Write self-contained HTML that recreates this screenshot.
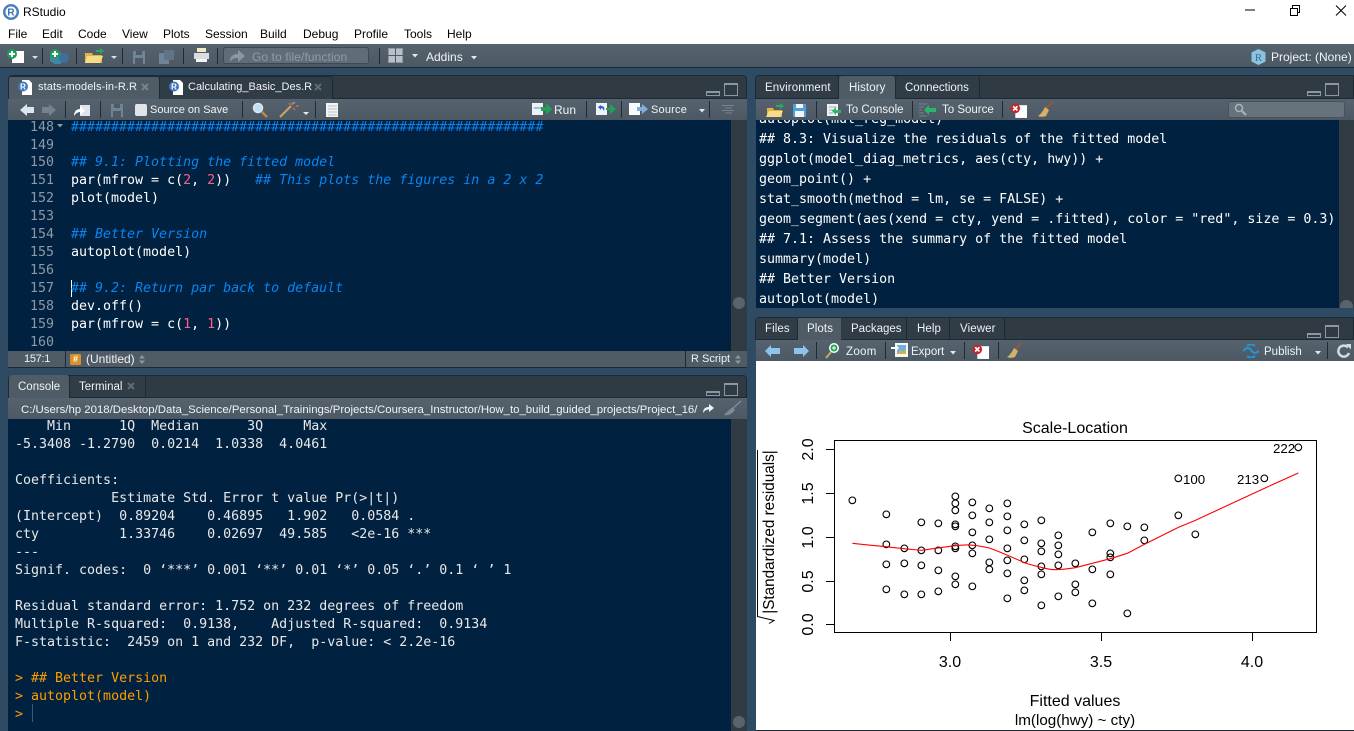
<!DOCTYPE html>
<html><head><meta charset="utf-8"><title>RStudio</title>
<style>
html,body{margin:0;padding:0}
body{width:1354px;height:731px;position:relative;overflow:hidden;background:#2f4a63;font:12px "Liberation Sans",sans-serif;color:#fff}
div,span.t,svg{position:absolute}
.t{position:absolute;white-space:pre;line-height:16px;color:#f0f3f5}
.m{position:absolute;white-space:pre;font:13.3px/18px "DejaVu Sans Mono","Liberation Mono",monospace;color:#fff;left:0;margin-top:2px}
.con .m{color:#e8e8e8}
.c{color:#0a84ee;font-style:italic}
.n{color:#ff5f85}
.g{position:absolute;white-space:pre;font:13.3px/18px "DejaVu Sans Mono",monospace;color:#8c9aa6;text-align:right;width:46px;left:0;margin-top:2px}
.bar{background:linear-gradient(#56636e,#4c5964)}
.tabs{background:#2f3a43}
.tab{position:absolute;background:#303c46;border:1px solid #1c2a37;border-bottom:none;border-radius:3px 3px 0 0;box-sizing:border-box}
.tab.a{background:#4f5c66}
.sep{position:absolute;width:1px;background:#1e2b36}
.mn{color:#000;font-size:12px}
.s{font-size:11px}
</style></head><body>

<!-- title bar -->
<div style="left:0;top:0;width:1354px;height:44px;background:#fff"></div>
<svg style="left:2px;top:3px" width="18" height="18" viewBox="0 0 18 18"><circle cx="9" cy="9" r="8" fill="#4a7fc0"/><circle cx="9" cy="9" r="5.500" fill="#fff"/><text x="9" y="12.500" font-size="10" font-weight="bold" text-anchor="middle" fill="#3a6fb0" font-family="Liberation Sans">R</text></svg>
<span class="t mn" style="left:23px;top:4px">RStudio</span>
<span class="t mn" style="left:8px;top:26px">File</span>
<span class="t mn" style="left:42px;top:26px">Edit</span>
<span class="t mn" style="left:78px;top:26px">Code</span>
<span class="t mn" style="left:122px;top:26px">View</span>
<span class="t mn" style="left:163px;top:26px">Plots</span>
<span class="t mn" style="left:205px;top:26px">Session</span>
<span class="t mn" style="left:260px;top:26px">Build</span>
<span class="t mn" style="left:303px;top:26px">Debug</span>
<span class="t mn" style="left:354px;top:26px">Profile</span>
<span class="t mn" style="left:404px;top:26px">Tools</span>
<span class="t mn" style="left:447px;top:26px">Help</span>
<svg style="left:1240px;top:0" width="114" height="22" viewBox="0 0 114 22"><path d="M5 10h10" stroke="#000" fill="none"/><path d="M50.500 8.500h7v7h-7zM52.500 8V5.500h7v7H58" stroke="#000" fill="none"/><path d="M96 5.500l10 10M106 5.500l-10 10" stroke="#000" fill="none"/></svg>

<!-- main toolbar -->
<div class="bar" style="left:0;top:44px;width:1354px;height:23px"></div>
<div style="left:0;top:67px;width:1354px;height:1px;background:#1c2c3b"></div>
<svg style="left:6px;top:47px" width="190" height="18" viewBox="0 0 190 18">
<path d="M6 4h12v12H6z" fill="#fff"/><circle cx="6" cy="7" r="5" fill="#1f9e55"/><path d="M3 7h6M6 4v6" stroke="#fff" stroke-width="2"/>
<path d="M26 9h6l-3 3z" fill="#ddd"/>
<path d="M44 9l5-4 5 0 4 4v5l-4 3h-5l-5-3z" fill="#3d88a8"/><circle cx="58" cy="11" r="5" fill="#3d6f9c"/><circle cx="49" cy="7" r="5" fill="#1f9e55"/><path d="M46 7h6M49 4v6" stroke="#fff" stroke-width="2"/>
<path d="M79 6h7l1 2h9v8H79z" fill="#e3b33f"/><path d="M81 9h16l-3 7H79z" fill="#f6dc88"/><path d="M90 3h4V1l4 3-4 3V5h-4z" fill="#2aa860"/>
<path d="M105 9h6l-3 3z" fill="#ddd"/>
<path d="M127 4h12v13h-12z" fill="#6f8496"/><path d="M130 4h6v4h-6zM129 11h8v6h-8z" fill="#4e5b66"/>
<path d="M153 6h10v11h-10z" fill="#6f8496"/><path d="M158 3h10v10h-10z" fill="#5f7486"/>
</svg>
<div class="sep" style="left:42px;top:48px;height:16px"></div>
<div class="sep" style="left:76px;top:48px;height:16px"></div>
<div class="sep" style="left:122px;top:48px;height:16px"></div>
<div class="sep" style="left:183px;top:48px;height:16px"></div>
<div class="sep" style="left:217px;top:48px;height:16px"></div>
<div class="sep" style="left:379px;top:48px;height:16px"></div>
<svg style="left:193px;top:47px" width="17" height="17" viewBox="0 0 17 17"><path d="M4 1h9v4H4z" fill="#f1e9c9"/><path d="M1 6h15v6H1z" fill="#d9dde0"/><path d="M3 12h11v3H3z" fill="#f4f6f7"/></svg>
<div style="left:223px;top:47px;width:146px;height:17px;background:#606d78;border:1px solid #3c4853;border-radius:3px;box-sizing:border-box"></div>
<svg style="left:229px;top:48px" width="17" height="15" viewBox="0 0 17 15"><path d="M1 14c0-6 3-8 8-8V2l7 6-7 6v-4c-4 0-6 1-8 4z" fill="#8b98a3"/></svg>
<span class="t" style="left:252px;top:49px;color:#8f9ca7;letter-spacing:.1px">Go to file/function</span>
<svg style="left:388px;top:48px" width="15" height="15" viewBox="0 0 15 15"><path d="M0 0h15v15H0z" fill="#8b98a3"/><path d="M1 1h6v6H1zM8 1h6v6H8zM1 8h6v6H1zM8 8h6v6H8z" fill="#b8c1c8"/><path d="M7 0h1v15H7zM0 7h15v1H0z" fill="#4e5b66"/></svg>
<svg style="left:412px;top:54px" width="6" height="4" viewBox="0 0 6 4"><path d="M0 0h6L3 3.500z" fill="#e6e9ec"/></svg>
<span class="t" style="left:426px;top:49px;">Addins</span>
<svg style="left:471px;top:56px" width="6" height="4" viewBox="0 0 6 4"><path d="M0 0h6L3 3.500z" fill="#e6e9ec"/></svg>
<svg style="left:1251px;top:49px" width="15" height="16" viewBox="0 0 15 16"><path d="M7.500 0l7 3.500v9l-7 3.500-7-3.500v-9z" fill="#8cc4e0"/><text x="7.500" y="12" font-size="11" text-anchor="middle" fill="#3a6fa0" font-family="Liberation Serif">R</text></svg>
<span class="t" style="left:1271px;top:49px;">Project: (None)</span>

<!-- SOURCE PANE -->
<div class="tabs" style="left:8px;top:75px;width:739px;height:24px;border-radius:4px 4px 0 0;border:1px solid #1c2a37;box-sizing:border-box"></div>
<div class="tab a" style="left:8px;top:76px;width:152px;height:24px;border-color:#1c2a37"></div>
<div class="tab" style="left:159px;top:76px;width:174px;height:23px"></div>
<svg style="left:17px;top:80px" width="17" height="16" viewBox="0 0 17 16"><path d="M5 0h7l3 3v12H5z" fill="#fff"/><circle cx="6" cy="6.500" r="5" fill="#3f78bd"/><text x="6" y="9.500" font-size="8" font-weight="bold" text-anchor="middle" fill="#fff" font-family="Liberation Sans">R</text></svg>
<span class="t s" style="left:38px;top:79px;letter-spacing:.1px">stats-models-in-R.R</span>
<svg style="left:141px;top:83px" width="8" height="8" viewBox="0 0 8 8"><path d="M1 1l6 6M7 1L1 7" stroke="#76838e" stroke-width="2"/></svg>
<svg style="left:168px;top:80px" width="17" height="16" viewBox="0 0 17 16"><path d="M5 0h7l3 3v12H5z" fill="#fff"/><circle cx="6" cy="6.500" r="5" fill="#3f78bd"/><text x="6" y="9.500" font-size="8" font-weight="bold" text-anchor="middle" fill="#fff" font-family="Liberation Sans">R</text></svg>
<span class="t s" style="left:188px;top:79px;">Calculating_Basic_Des.R</span>
<svg style="left:314px;top:83px" width="8" height="8" viewBox="0 0 8 8"><path d="M1 1l6 6M7 1L1 7" stroke="#5f6c77" stroke-width="2"/></svg>
<svg style="left:706px;top:82px" width="33" height="15" viewBox="0 0 33 15"><path d="M.5 9.500h13v4H.5z" fill="none" stroke="#8b98a3"/><path d="M1 9h13v2H1z" fill="#8b98a3"/><path d="M18.500 1.500h13v12h-13z" fill="none" stroke="#8b98a3"/><path d="M18 1h14v2H18z" fill="#8b98a3"/></svg>

<div class="bar" style="left:8px;top:99px;width:739px;height:21px"></div>
<svg style="left:20px;top:102px" width="330" height="16" viewBox="0 0 330 16">
<path d="M0 8l7-6v3h7v6H7v3z" fill="#dde6ee"/><path d="M28 8l-7-6v3h-7v6h7v3z" fill="#76838e" transform="translate(8,0)"/>
<path d="M60 3h10v11H60z" fill="#dfe5ea"/><path d="M54 14c0-4 2-7 6-7V4l5 4.500-5 4.500v-3c-2 0-4 1-6 4z" fill="#fff"/>
<path d="M91 2h12v13H91z" fill="#6f8496"/><path d="M94 2h6v4h-6zM93 9h8v6h-8z" fill="#4e5b66"/>
</svg>
<div class="sep" style="left:65px;top:101px;height:17px"></div>
<div class="sep" style="left:100px;top:101px;height:17px"></div>
<div class="sep" style="left:242px;top:101px;height:17px"></div>
<div class="sep" style="left:315px;top:101px;height:17px"></div>
<div style="left:135px;top:104px;width:12px;height:12px;background:#dfe5ea;border-radius:2px"></div>
<span class="t s" style="left:150px;top:102px;">Source on Save</span>
<svg style="left:252px;top:102px" width="16" height="16" viewBox="0 0 16 16"><circle cx="6" cy="6" r="4.500" fill="#bfe0f5" stroke="#dfe5ea" stroke-width="1.500"/><path d="M9.500 9.500L15 15" stroke="#b98a4a" stroke-width="2.500"/></svg>
<svg style="left:279px;top:101px" width="32" height="17" viewBox="0 0 32 17"><path d="M1 16L12 5" stroke="#c9a36a" stroke-width="2"/><path d="M13 1v3M17 5h3M14 7l2 2M10 2l1 2" stroke="#e86a4a" stroke-width="1.200"/><path d="M16 1l-2 2" stroke="#70b0e0" stroke-width="1.200"/><path d="M24 11h6l-3 3z" fill="#e6e9ec"/></svg>
<svg style="left:325px;top:103px" width="14" height="14" viewBox="0 0 14 14"><path d="M1 0h12v14H1z" fill="#f1f3f5"/><path d="M3 3h9M3 6h9M3 9h9M3 12h9" stroke="#b9c2c9"/></svg>

<svg style="left:532px;top:102px" width="20" height="15" viewBox="0 0 20 15"><path d="M0 1h11v12H0z" fill="#eef2f5"/><path d="M2 6h7" stroke="#9cc0e0" stroke-width="2"/><path d="M9 5h5V1l6 6-6 6V9H9z" fill="#1fa456"/></svg>
<span class="t" style="left:554px;top:102px;">Run</span>
<div class="sep" style="left:586px;top:101px;height:17px"></div>
<svg style="left:596px;top:102px" width="20" height="15" viewBox="0 0 20 15"><path d="M0 1h11v12H0z" fill="#eef2f5"/><path d="M2 5l3-2v1c3 0 4 2 3 5l-1-2c-1-1-2-1-2 0v1z" fill="#2a5fd0"/><path d="M10 6h4V2l6 5-6 5V8h-4z" fill="#1fa456"/></svg>
<div class="sep" style="left:621px;top:101px;height:17px"></div>
<svg style="left:629px;top:102px" width="19" height="15" viewBox="0 0 19 15"><path d="M0 1h11v12H0z" fill="#f7f9fa"/><path d="M8 5h5V2l6 5-6 5V9H8z" fill="#7fb0dc"/></svg>
<span class="t s" style="left:651px;top:102px;letter-spacing:.2px">Source</span>
<svg style="left:699px;top:109px" width="6" height="4" viewBox="0 0 6 4"><path d="M0 0h6L3 3.500z" fill="#e6e9ec"/></svg>
<div class="sep" style="left:709px;top:101px;height:17px"></div>
<svg style="left:722px;top:105px" width="12" height="10" viewBox="0 0 12 10"><path d="M0 .5h12M3 3h7M0 5.500h12M3 8h7" stroke="#76838e"/></svg>

<!-- editor -->
<div id="ed" style="left:8px;top:120px;width:739px;height:231px;background:#002240;overflow:hidden">
 <div style="left:723px;top:0;width:16px;height:231px;background:#303b44"></div>
 <div style="left:725px;top:177px;width:12px;height:12px;border-radius:6px;background:#59636c"></div>
 <span class="g" style="top:-3px">148</span><span class="g" style="top:15px">149</span><span class="g" style="top:32px">150</span><span class="g" style="top:50px">151</span><span class="g" style="top:68px">152</span><span class="g" style="top:86px">153</span><span class="g" style="top:104px">154</span><span class="g" style="top:122px">155</span><span class="g" style="top:140px">156</span><span class="g" style="top:158px">157</span><span class="g" style="top:176px">158</span><span class="g" style="top:194px">159</span><span class="g" style="top:212px">160</span>
 <svg style="left:49px;top:4px" width="6" height="4" viewBox="0 0 6 4"><path d="M0 0h6L3 3.500z" fill="#8c9aa6"/></svg>
 <div style="left:62.500px;top:160px;width:1.500px;height:17px;background:#fff"></div>
 <div style="left:63px;top:0;width:660px;height:231px">
  <span class="m c" style="top:-3px;font-style:normal">###########################################################</span>
  <span class="m c" style="top:32px">## 9.1: Plotting the fitted model</span>
  <span class="m" style="top:50px">par(mfrow = c(<span class="n">2</span>, <span class="n">2</span>))   <span class="c">## This plots the figures in a 2 x 2</span></span>
  <span class="m" style="top:68px">plot(model)</span>
  <span class="m c" style="top:104px">## Better Version</span>
  <span class="m" style="top:122px">autoplot(model)</span>
  <span class="m c" style="top:158px">## 9.2: Return par back to default</span>
  <span class="m" style="top:176px">dev.off()</span>
  <span class="m" style="top:194px">par(mfrow = c(<span class="n">1</span>, <span class="n">1</span>))</span>
 </div>
</div>
<div style="left:8px;top:351px;width:739px;height:16px;background:#4f5c66"></div>
<div style="left:8px;top:367px;width:739px;height:1px;background:#1c2a37"></div>
<div class="sep" style="left:65px;top:351px;height:16px"></div>
<div class="sep" style="left:685px;top:351px;height:16px"></div>
<span class="t s" style="left:24px;top:351px;letter-spacing:-.3px">157:1</span>
<div style="left:70px;top:354px;width:11px;height:11px;background:#d9902a;border-radius:1px;font:bold 9px/11px 'Liberation Sans';text-align:center;color:#fff">#</div>
<span class="t" style="left:86px;top:351px">(Untitled)</span>
<svg style="left:139px;top:355px" width="6" height="9" viewBox="0 0 6 9"><path d="M0 3.500L3 0l3 3.500zM0 5.500L3 9l3-3.500z" fill="#8b98a3"/></svg>
<span class="t s" style="left:691px;top:351px;">R Script</span>
<svg style="left:735px;top:355px" width="6" height="9" viewBox="0 0 6 9"><path d="M0 3.500L3 0l3 3.500zM0 5.500L3 9l3-3.500z" fill="#8b98a3"/></svg>

<!-- CONSOLE -->
<div class="tabs" style="left:8px;top:375px;width:739px;height:23px;border-radius:4px 4px 0 0;border:1px solid #1c2a37;box-sizing:border-box"></div>
<div class="tab a" style="left:9px;top:375px;width:61px;height:23px;border:none;border-right:1px solid #1c2a37"></div>
<div style="left:70px;top:376px;width:75px;height:21px;background:#303c46;border-right:1px solid #1c2a37"></div>
<span class="t" style="left:18px;top:379px;font-size:11.500px">Console</span>
<span class="t" style="left:79px;top:379px;font-size:11.500px">Terminal</span>
<svg style="left:127px;top:382px" width="8" height="8" viewBox="0 0 8 8"><path d="M1 1l6 6M7 1L1 7" stroke="#5f6c77" stroke-width="2"/></svg>
<svg style="left:706px;top:382px" width="33" height="15" viewBox="0 0 33 15"><path d="M.5 9.500h13v4H.5z" fill="none" stroke="#8b98a3"/><path d="M1 9h13v2H1z" fill="#8b98a3"/><path d="M18.500 1.500h13v12h-13z" fill="none" stroke="#8b98a3"/><path d="M18 1h14v2H18z" fill="#8b98a3"/></svg>
<div class="bar" style="left:8px;top:398px;width:739px;height:21px"></div>
<span class="t" style="left:21px;top:402px;font-size:11.400px;">C:/Users/hp 2018/Desktop/Data_Science/Personal_Trainings/Projects/Coursera_Instructor/How_to_build_guided_projects/Project_16/</span>
<svg style="left:702px;top:403px" width="13" height="11" viewBox="0 0 13 11"><path d="M1 10c0-4 2-6 6-6V1l5 4-5 4V6.500c-3 0-4 1-6 3.500z" fill="#eef2f5"/></svg>
<svg style="left:723px;top:400px" width="19" height="17" viewBox="0 0 19 17"><path d="M18 1L9 9" stroke="#7f8c97" stroke-width="1.500"/><path d="M10 7c-2 1-6 5-9 8 4 1 8-1 11-5z" fill="#7f8c97"/></svg>

<div class="con" style="left:8px;top:419px;width:739px;height:312px;background:#002240;overflow:hidden">
 <div style="left:723px;top:0;width:16px;height:312px;background:#303b44"></div>
 <div style="left:725px;top:297px;width:12px;height:12px;border-radius:6px;background:#59636c"></div>
 <div style="left:7px;top:0;width:715px;height:312px">
<span class="m" style="top:-3px">    Min      1Q  Median      3Q     Max </span>
<span class="m" style="top:15px">-5.3408 -1.2790  0.0214  1.0338  4.0461 </span>
<span class="m" style="top:51px">Coefficients:</span>
<span class="m" style="top:69px">            Estimate Std. Error t value Pr(&gt;|t|)    </span>
<span class="m" style="top:87px">(Intercept)  0.89204    0.46895   1.902   0.0584 .  </span>
<span class="m" style="top:105px">cty          1.33746    0.02697  49.585   &lt;2e-16 ***</span>
<span class="m" style="top:123px">---</span>
<span class="m" style="top:141px">Signif. codes:  0 ‘***’ 0.001 ‘**’ 0.01 ‘*’ 0.05 ‘.’ 0.1 ‘ ’ 1</span>
<span class="m" style="top:177px">Residual standard error: 1.752 on 232 degrees of freedom</span>
<span class="m" style="top:195px">Multiple R-squared:  0.9138,    Adjusted R-squared:  0.9134 </span>
<span class="m" style="top:213px">F-statistic:  2459 on 1 and 232 DF,  p-value: &lt; 2.2e-16</span>
<span class="m" style="top:249px;color:#ff9d00">&gt; ## Better Version</span>
<span class="m" style="top:267px;color:#ff9d00">&gt; autoplot(model)</span>
<span class="m" style="top:285px;color:#ff9d00">&gt; </span>
<div style="left:17px;top:285px;width:1px;height:18px;background:#3b5a78"></div>
 </div>
</div>

<!-- ENV/HISTORY PANE -->
<div class="tabs" style="left:755px;top:75px;width:599px;height:24px;border-radius:4px 0 0 0;border:1px solid #1c2a37;box-sizing:border-box"></div>
<div class="tab" style="left:756px;top:76px;width:83px;height:22px;border:none;border-right:1px solid #1c2a37"></div>
<div class="tab a" style="left:839px;top:76px;width:56px;height:23px;border:none"></div>
<div class="tab" style="left:895px;top:76px;width:85px;height:22px;border:none;border-right:1px solid #1c2a37;border-left:1px solid #1c2a37"></div>
<span class="t" style="left:765px;top:80px;font-size:11.500px;letter-spacing:.1px">Environment</span>
<span class="t" style="left:849px;top:80px;font-size:11.500px;letter-spacing:.1px">History</span>
<span class="t" style="left:905px;top:80px;font-size:11.500px;">Connections</span>
<svg style="left:1307px;top:82px" width="33" height="15" viewBox="0 0 33 15"><path d="M.5 9.500h13v4H.5z" fill="none" stroke="#8b98a3"/><path d="M1 9h13v2H1z" fill="#8b98a3"/><path d="M18.500 1.500h13v12h-13z" fill="none" stroke="#8b98a3"/><path d="M18 1h14v2H18z" fill="#8b98a3"/></svg>
<div class="bar" style="left:756px;top:99px;width:598px;height:21px"></div>
<svg style="left:764px;top:102px" width="48" height="16" viewBox="0 0 48 16"><path d="M3 6h6l1 2h8v7H3z" fill="#e3b33f"/><path d="M5 9h14l-3 6H2z" fill="#f6dc88"/><path d="M12 3h4V1l4 3-4 3V5h-4z" fill="#2aa860"/><path d="M29 2h13v13H29z" fill="#4f9fdc"/><path d="M32 2h7v4h-7zM31 9h9v6h-9z" fill="#f2f5f7"/></svg>
<div class="sep" style="left:816px;top:101px;height:17px"></div>
<svg style="left:826px;top:102px" width="16" height="15" viewBox="0 0 16 15"><path d="M1 2h11v12H1z" fill="#eef2f5"/><path d="M3 5h7M3 8h4M3 11h4" stroke="#a0aab2"/><path d="M15 8H10V5L6 9l4 4v-2h5z" fill="#2ab56a"/></svg>
<span class="t" style="left:846px;top:102px;font-size:11.500px;">To Console</span>
<div class="sep" style="left:912px;top:101px;height:17px"></div>
<svg style="left:919px;top:103px" width="18" height="14" viewBox="0 0 18 14"><path d="M0 1h8M0 4h5M0 7h3M0 10h5M0 13h8" stroke="#76838e"/><path d="M17 5h-7V2L5 7l5 5V9h7z" fill="#2ab56a"/></svg>
<span class="t" style="left:942px;top:102px;font-size:11.500px;">To Source</span>
<div class="sep" style="left:1002px;top:101px;height:17px"></div>
<svg style="left:1010px;top:103px" width="17" height="15" viewBox="0 0 16 14"><path d="M5 2h11v12H5z" fill="#fff"/><circle cx="5" cy="5" r="4.500" fill="#c8222a"/><path d="M3 3l4 4M7 3L3 7" stroke="#fff" stroke-width="1.500"/></svg>
<svg style="left:1037px;top:101px" width="16" height="17" viewBox="0 0 16 17"><path d="M15 1L9 8" stroke="#b0512e" stroke-width="1.500"/><path d="M8 6l4 3-3 6c-3 1-6 1-8 0 3-2 5-5 7-9z" fill="#d5b16a"/></svg>
<div style="left:1228px;top:101px;width:117px;height:17px;background:#66727c;border:1px solid #46525c;border-radius:3px;box-sizing:border-box"></div>
<svg style="left:1234px;top:103px" width="13" height="13" viewBox="0 0 13 13"><circle cx="5" cy="5" r="3.500" fill="none" stroke="#a9b4bc" stroke-width="1.500"/><path d="M8 8l4 4" stroke="#a9b4bc" stroke-width="2"/></svg>
<div style="left:756px;top:120px;width:598px;height:188px;background:#002240;overflow:hidden">
 <div style="left:583px;top:0;width:15px;height:188px;background:#303b44"></div>
 <div style="left:584px;top:180px;width:13px;height:13px;border-radius:7px;background:#59636c"></div>
 <div style="left:3px;top:0;width:582px;height:188px;overflow:hidden">
 <span class="m" style="top:-11px">autoplot(mul_reg_model)</span>
 <span class="m" style="top:9px">## 8.3: Visualize the residuals of the fitted model</span>
 <span class="m" style="top:29px">ggplot(model_diag_metrics, aes(cty, hwy)) +</span>
 <span class="m" style="top:49px">geom_point() +</span>
 <span class="m" style="top:69px">stat_smooth(method = lm, se = FALSE) +</span>
 <span class="m" style="top:89px">geom_segment(aes(xend = cty, yend = .fitted), color = "red", size = 0.3)</span>
 <span class="m" style="top:109px">## 7.1: Assess the summary of the fitted model</span>
 <span class="m" style="top:129px">summary(model)</span>
 <span class="m" style="top:149px">## Better Version</span>
 <span class="m" style="top:169px">autoplot(model)</span>
 </div>
</div>

<!-- PLOTS PANE -->
<div class="tabs" style="left:755px;top:317px;width:599px;height:23px;border-radius:4px 0 0 0;border:1px solid #1c2a37;box-sizing:border-box"></div>
<div style="left:756px;top:318px;width:41px;height:21px;background:#303c46;border-right:1px solid #1c2a37"></div>
<div style="left:798px;top:318px;width:43px;height:22px;background:#4f5c66"></div>
<div style="left:841px;top:318px;width:65px;height:21px;background:#303c46;border-right:1px solid #1c2a37"></div>
<div style="left:907px;top:318px;width:42px;height:21px;background:#303c46;border-right:1px solid #1c2a37"></div>
<div style="left:950px;top:318px;width:54px;height:21px;background:#303c46;border-right:1px solid #1c2a37"></div>
<span class="t" style="left:765px;top:321px;font-size:11.500px;letter-spacing:.1px">Files</span>
<span class="t" style="left:807px;top:321px;font-size:11.500px;letter-spacing:.1px">Plots</span>
<span class="t" style="left:851px;top:321px;font-size:11.500px;">Packages</span>
<span class="t" style="left:917px;top:321px;font-size:11.500px;letter-spacing:.1px">Help</span>
<span class="t" style="left:960px;top:321px;font-size:11.500px;letter-spacing:.1px">Viewer</span>
<svg style="left:1307px;top:324px" width="33" height="15" viewBox="0 0 33 15"><path d="M.5 9.500h13v4H.5z" fill="none" stroke="#8b98a3"/><path d="M1 9h13v2H1z" fill="#8b98a3"/><path d="M18.500 1.500h13v12h-13z" fill="none" stroke="#8b98a3"/><path d="M18 1h14v2H18z" fill="#8b98a3"/></svg>
<div class="bar" style="left:756px;top:340px;width:598px;height:21px"></div>
<svg style="left:765px;top:344px" width="46" height="14" viewBox="0 0 46 14"><path d="M0 7l6-6v3h9v6H6v3z" fill="#8fc4ea"/><path d="M44 7l-6-6v3h-9v6h9v3z" fill="#8fc4ea"/></svg>
<div class="sep" style="left:816px;top:342px;height:17px"></div>
<svg style="left:825px;top:342px" width="15" height="17" viewBox="0 0 15 17"><path d="M1 16l5-6" stroke="#c9a36a" stroke-width="2"/><circle cx="9" cy="6" r="5" fill="#fff"/><circle cx="9" cy="6" r="3.500" fill="#1fa456"/><path d="M7 6h4M9 4v4" stroke="#fff"/></svg>
<span class="t" style="left:846px;top:344px;font-size:11.500px;letter-spacing:.3px">Zoom</span>
<div class="sep" style="left:885px;top:342px;height:17px"></div>
<svg style="left:891px;top:342px" width="17" height="16" viewBox="0 0 17 16"><path d="M4 1h13v14H4z" fill="#f4f6f7"/><path d="M6 3h9v9H6z" fill="#6fb0e0"/><path d="M6 12l3-4 3 2 3-3v5H6z" fill="#d8b04a"/><path d="M0 5h5V3l3 3-3 3V7H0z" fill="#fff"/></svg>
<span class="t" style="left:911px;top:344px;font-size:11.500px;">Export</span>
<svg style="left:950px;top:351px" width="6" height="4" viewBox="0 0 6 4"><path d="M0 0h6L3 3.500z" fill="#e6e9ec"/></svg>
<div class="sep" style="left:964px;top:342px;height:17px"></div>
<svg style="left:972px;top:344px" width="17" height="15" viewBox="0 0 16 14"><path d="M5 2h11v12H5z" fill="#fff"/><circle cx="5" cy="5" r="4.500" fill="#c8222a"/><path d="M3 3l4 4M7 3L3 7" stroke="#fff" stroke-width="1.500"/></svg>
<div class="sep" style="left:998px;top:342px;height:17px"></div>
<svg style="left:1006px;top:342px" width="16" height="17" viewBox="0 0 16 17"><path d="M15 1L9 8" stroke="#b0512e" stroke-width="1.500"/><path d="M8 6l4 3-3 6c-3 1-6 1-8 0 3-2 5-5 7-9z" fill="#d5b16a"/></svg>
<svg style="left:1243px;top:344px" width="16" height="14" viewBox="0 0 16 14"><path d="M0 7c2-2 3-3 5-3 3 0 4 5 7 5 1 0 2-1 4-2" fill="none" stroke="#1f96d8" stroke-width="2"/><path d="M4 2c2-2 6-2 8 0M4 12c2 2 6 2 8 0" fill="none" stroke="#1f96d8" stroke-width="2"/></svg>
<span class="t" style="left:1264px;top:344px;font-size:11.500px;">Publish</span>
<svg style="left:1315px;top:351px" width="6" height="4" viewBox="0 0 6 4"><path d="M0 0h6L3 3.500z" fill="#e6e9ec"/></svg>
<div class="sep" style="left:1327px;top:342px;height:17px"></div>
<svg style="left:1337px;top:344px" width="14" height="14" viewBox="0 0 14 14"><path d="M11 3.500A5.500 5.500 0 1 0 12 9" fill="none" stroke="#d5dade" stroke-width="2.500"/><path d="M9 0h5v5.500z" fill="#d5dade"/></svg>

<!-- plot -->
<div style="left:756px;top:361px;width:598px;height:370px;background:#fff"></div>
<div style="left:756px;top:730px;width:598px;height:1px;background:#1c2a37"></div>
<svg style="left:0;top:0" width="1354" height="731" viewBox="0 0 1354 731">
<g fill="none" stroke="#000" stroke-width="1">
<rect x="834.500" y="440.500" width="482" height="192"/>
<path d="M826 449.500h8M826 493.500h8M826 537.500h8M826 581.500h8M826 624.500h8M950.500 632v9M1101.500 632v9M1252.500 632v9"/>
<path d="M757.500 450v166.500L774 620.500L769 623.500"/>
</g>
<g transform="translate(750,410) scale(.33333)" fill="none" stroke="#000" stroke-width="3.300">
<circle cx="307" cy="271" r="10"/><circle cx="409" cy="313" r="10"/><circle cx="409" cy="403" r="10"/><circle cx="409" cy="463" r="10"/><circle cx="409" cy="538" r="10"/><circle cx="463" cy="415" r="10"/><circle cx="463" cy="460" r="10"/><circle cx="463" cy="553" r="10"/><circle cx="514" cy="337" r="10"/><circle cx="514" cy="421" r="10"/><circle cx="514" cy="466" r="10"/><circle cx="514" cy="553" r="10"/><circle cx="565" cy="340" r="10"/><circle cx="565" cy="421" r="10"/><circle cx="565" cy="481" r="10"/><circle cx="565" cy="544" r="10"/><circle cx="616" cy="259" r="10"/><circle cx="616" cy="280" r="10"/><circle cx="616" cy="301" r="10"/><circle cx="616" cy="343" r="10"/><circle cx="616" cy="349" r="10"/><circle cx="616" cy="409" r="10"/><circle cx="616" cy="415" r="10"/><circle cx="616" cy="499" r="10"/><circle cx="616" cy="523" r="10"/><circle cx="667" cy="277" r="10"/><circle cx="667" cy="316" r="10"/><circle cx="667" cy="367" r="10"/><circle cx="667" cy="406" r="10"/><circle cx="667" cy="430" r="10"/><circle cx="667" cy="529" r="10"/><circle cx="718" cy="295" r="10"/><circle cx="718" cy="337" r="10"/><circle cx="718" cy="388" r="10"/><circle cx="718" cy="457" r="10"/><circle cx="718" cy="478" r="10"/><circle cx="772" cy="280" r="10"/><circle cx="772" cy="319" r="10"/><circle cx="772" cy="361" r="10"/><circle cx="772" cy="415" r="10"/><circle cx="772" cy="451" r="10"/><circle cx="772" cy="490" r="10"/><circle cx="772" cy="565" r="10"/><circle cx="823" cy="343" r="10"/><circle cx="823" cy="391" r="10"/><circle cx="823" cy="448" r="10"/><circle cx="823" cy="511" r="10"/><circle cx="823" cy="541" r="10"/><circle cx="874" cy="331" r="10"/><circle cx="874" cy="400" r="10"/><circle cx="874" cy="424" r="10"/><circle cx="874" cy="469" r="10"/><circle cx="874" cy="493" r="10"/><circle cx="874" cy="586" r="10"/>
<circle cx="925" cy="376" r="10"/><circle cx="925" cy="406" r="10"/><circle cx="925" cy="433" r="10"/><circle cx="925" cy="466" r="10"/><circle cx="925" cy="559" r="10"/><circle cx="976" cy="460" r="10"/><circle cx="976" cy="523" r="10"/><circle cx="976" cy="547" r="10"/><circle cx="1027" cy="367" r="10"/><circle cx="1027" cy="478" r="10"/><circle cx="1027" cy="580" r="10"/><circle cx="1081" cy="340" r="10"/><circle cx="1081" cy="430" r="10"/><circle cx="1081" cy="442" r="10"/><circle cx="1081" cy="493" r="10"/><circle cx="1132" cy="349" r="10"/><circle cx="1132" cy="610" r="10"/><circle cx="1183" cy="352" r="10"/><circle cx="1183" cy="391" r="10"/><circle cx="1285" cy="316" r="10"/><circle cx="1336" cy="373" r="10"/><circle cx="1285" cy="205" r="10"/><circle cx="1543" cy="205" r="10"/><circle cx="1645" cy="112" r="10"/>
<path stroke="#f00" stroke-linejoin="round" d="M307 400L345 404L409 410C430 413 463 416 514 421C540 418 565 413 616 407C640 404 667 402 718 414C740 422 772 435 823 458C850 468 874 472 900 478C910 480 925 481 976 473L1027 460L1081 446L1132 430L1183 403L1285 352L1336 331L1543 235L1645 189"/>
</g>
<g font-family="Liberation Sans,sans-serif" fill="#000" font-size="16">
<text x="1075" y="433" text-anchor="middle">Scale-Location</text>
<text x="950" y="667" text-anchor="middle">3.0</text>
<text x="1101" y="667" text-anchor="middle">3.5</text>
<text x="1252" y="667" text-anchor="middle">4.0</text>
<text x="1075" y="706" text-anchor="middle">Fitted values</text>
<text x="1075" y="725" text-anchor="middle" font-size="15.200">lm(log(hwy) ~ cty)</text>
<text transform="translate(813,449.500) rotate(-90)" text-anchor="middle">2.0</text>
<text transform="translate(813,493.500) rotate(-90)" text-anchor="middle">1.5</text>
<text transform="translate(813,537.500) rotate(-90)" text-anchor="middle">1.0</text>
<text transform="translate(813,581.500) rotate(-90)" text-anchor="middle">0.5</text>
<text transform="translate(813,624.500) rotate(-90)" text-anchor="middle">0.0</text>
<text transform="translate(774,532) rotate(-90)" text-anchor="middle" font-size="15.300">|Standardized residuals|</text>
<text x="1183" y="484" font-size="13.300">100</text>
<text x="1237" y="484" font-size="13.300">213</text>
<text x="1273" y="453" font-size="13.300">222</text>
</g>
</svg>
</body></html>
